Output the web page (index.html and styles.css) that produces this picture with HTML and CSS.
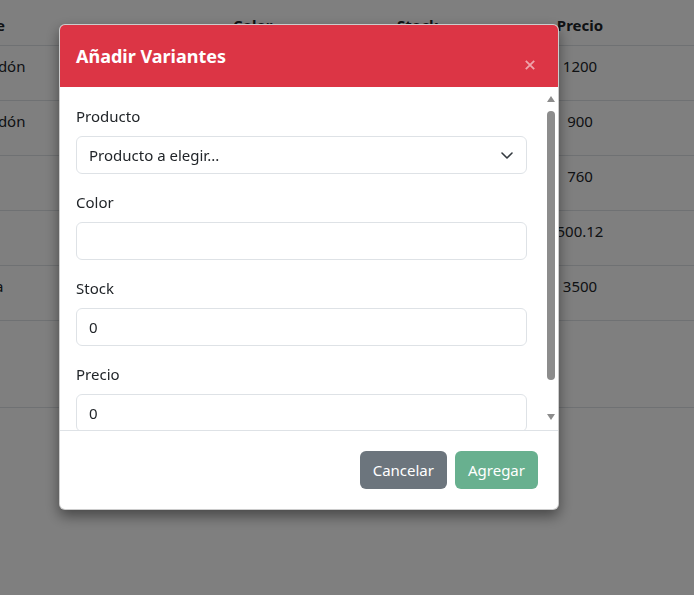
FILE: index.html
```html
<!DOCTYPE html>
<html lang="es">
<head>
<meta charset="utf-8">
<title>Añadir Variantes</title>
<link rel="stylesheet" href="styles.css">
</head>
<body>
<div class="page">
  <table class="data">
    <thead>
      <tr>
        <th class="c-name">Nombre</th>
        <th class="c-color">Color</th>
        <th class="c-stock">Stock</th>
        <th class="c-price">Precio</th>
        <th class="c-rest"></th>
      </tr>
    </thead>
    <tbody>
      <tr><td>De algodón</td><td>Blanco</td><td>12</td><td class="num">1200</td><td></td></tr>
      <tr><td>De algodón</td><td>Negro</td><td>8</td><td class="num">900</td><td></td></tr>
      <tr><td>Gorro</td><td>Rojo</td><td>20</td><td class="num">760</td><td></td></tr>
      <tr><td>Polo</td><td>Azul</td><td>5</td><td class="num">500.12</td><td></td></tr>
      <tr><td>Bufanda</td><td>Gris</td><td>3</td><td class="num">3500</td><td></td></tr>
      <tr class="tall"><td></td><td></td><td></td><td></td><td></td></tr>
    </tbody>
  </table>
</div>

<div class="backdrop"></div>

<div class="modal">
  <div class="modal-content">
    <div class="modal-header">
      <h5 class="modal-title">Añadir Variantes</h5>
      <button class="btn-close" type="button" aria-label="Cerrar">
        <svg width="10" height="10" viewBox="0 0 10 10"><path d="M0.8 0.8 L9.2 9.2 M9.2 0.8 L0.8 9.2" stroke="#fff" stroke-width="1.8" fill="none"/></svg>
      </button>
    </div>
    <div class="modal-scroll">
      <div class="modal-body">
        <div class="group">
          <label class="form-label">Producto</label>
          <div class="form-select">
            <span>Producto a elegir...</span>
            <svg width="12" height="7" viewBox="0 0 12 7"><polyline points="1,1 6,6 11,1" fill="none" stroke="#343a40" stroke-width="1.6" stroke-linecap="round" stroke-linejoin="round"/></svg>
          </div>
        </div>
        <div class="group">
          <label class="form-label">Color</label>
          <div class="form-control"></div>
        </div>
        <div class="group">
          <label class="form-label">Stock</label>
          <div class="form-control">0</div>
        </div>
        <div class="group">
          <label class="form-label">Precio</label>
          <div class="form-control">0</div>
        </div>
      </div>
      <div class="scrollbar" aria-hidden="true">
        <svg class="arrow-up" width="8" height="6" viewBox="0 0 8 6"><polygon points="4,0 8,6 0,6" fill="#8c8c8c"/></svg>
        <div class="thumb"></div>
        <svg class="arrow-down" width="8" height="6" viewBox="0 0 8 6"><polygon points="0,0 8,0 4,6" fill="#8c8c8c"/></svg>
      </div>
    </div>
    <div class="modal-footer">
      <button class="btn btn-secondary" type="button">Cancelar</button>
      <button class="btn btn-success" type="button" disabled>Agregar</button>
    </div>
  </div>
</div>
</body>
</html>
```

FILE: styles.css
```css
html, body {
  margin: 0;
  padding: 0;
}

body {
  font-family: "Noto Sans", "Open Sans", sans-serif;
  font-size: 15px;
  line-height: 24px;
  color: #212529;
  background: #fff;
  overflow: hidden;
  height: 595px;
}

.page {
  padding-top: 5px;
}

.data {
  border-collapse: separate;
  border-spacing: 0;
  table-layout: fixed;
  width: 800px;
  margin-left: -64px;
}

.c-name { width: 273px; }
.c-color { width: 148px; }
.c-stock { width: 143px; }
.c-price { width: 48px; }

.data th,
.data td {
  padding: 8px;
  border-bottom: 1px solid #dee2e6;
  text-align: left;
  vertical-align: top;
  white-space: nowrap;
}

.data th {
  font-weight: 700;
  height: 24px;
}

.data td {
  height: 38px;
}

.data .c-price,
.data .num {
  text-align: center;
}

.data .tall td {
  height: 70px;
}

.backdrop {
  position: fixed;
  inset: 0;
  background: rgba(0, 0, 0, 0.5);
}

.modal {
  position: fixed;
  left: 59px;
  top: 24px;
  width: 500px;
}

.modal-content {
  background: #fff;
  border: 1px solid rgba(0, 0, 0, 0.2);
  border-radius: 6px;
  box-shadow: 0 6px 14px rgba(0, 0, 0, 0.45);
  overflow: hidden;
}

.modal-header {
  display: flex;
  justify-content: space-between;
  align-items: center;
  background: #dc3545;
  padding: 16px;
}

.modal-title {
  margin: 0;
  color: #fff;
  font-size: 18px;
  font-weight: 700;
  line-height: 30px;
}

.btn-close {
  align-self: flex-end;
  margin-bottom: -6px;
  width: 24px;
  height: 24px;
  padding: 0;
  border: 0;
  background: transparent;
  display: flex;
  align-items: center;
  justify-content: center;
  opacity: 0.55;
}

.modal-scroll {
  display: flex;
  height: 343px;
  overflow: hidden;
}

.modal-body {
  flex: 1;
  min-width: 0;
  padding: 17px 16px 16px;
}

.scrollbar {
  width: 15px;
  flex: none;
  display: flex;
  flex-direction: column;
  align-items: center;
  background: #fff;
}

.arrow-up {
  margin-top: 9px;
  flex: none;
}

.thumb {
  width: 8px;
  height: 269px;
  margin-top: 9px;
  border-radius: 4px;
  background: #8c8c8c;
  flex: none;
}

.arrow-down {
  margin-top: auto;
  margin-bottom: 10px;
  flex: none;
}

.group {
  margin-bottom: 16px;
}

.form-label {
  display: block;
  margin-bottom: 8px;
}

.form-control,
.form-select {
  box-sizing: border-box;
  height: 38px;
  border: 1px solid #dee2e6;
  border-radius: 6px;
  padding: 6px 12px;
  color: #212529;
  background: #fff;
}

.form-select {
  display: flex;
  align-items: center;
  justify-content: space-between;
  padding-right: 13px;
}

.modal-footer {
  display: flex;
  justify-content: flex-end;
  gap: 8px;
  padding: 20px;
  border-top: 1px solid #dee2e6;
}

.btn {
  height: 38px;
  padding: 0 13px;
  border: 0;
  border-radius: 6px;
  font-family: inherit;
  font-size: 15px;
  line-height: 24px;
  color: #fff;
}

.btn-secondary {
  background: #6c757d;
}

.btn-success {
  background: #198754;
  opacity: 0.65;
}
```
